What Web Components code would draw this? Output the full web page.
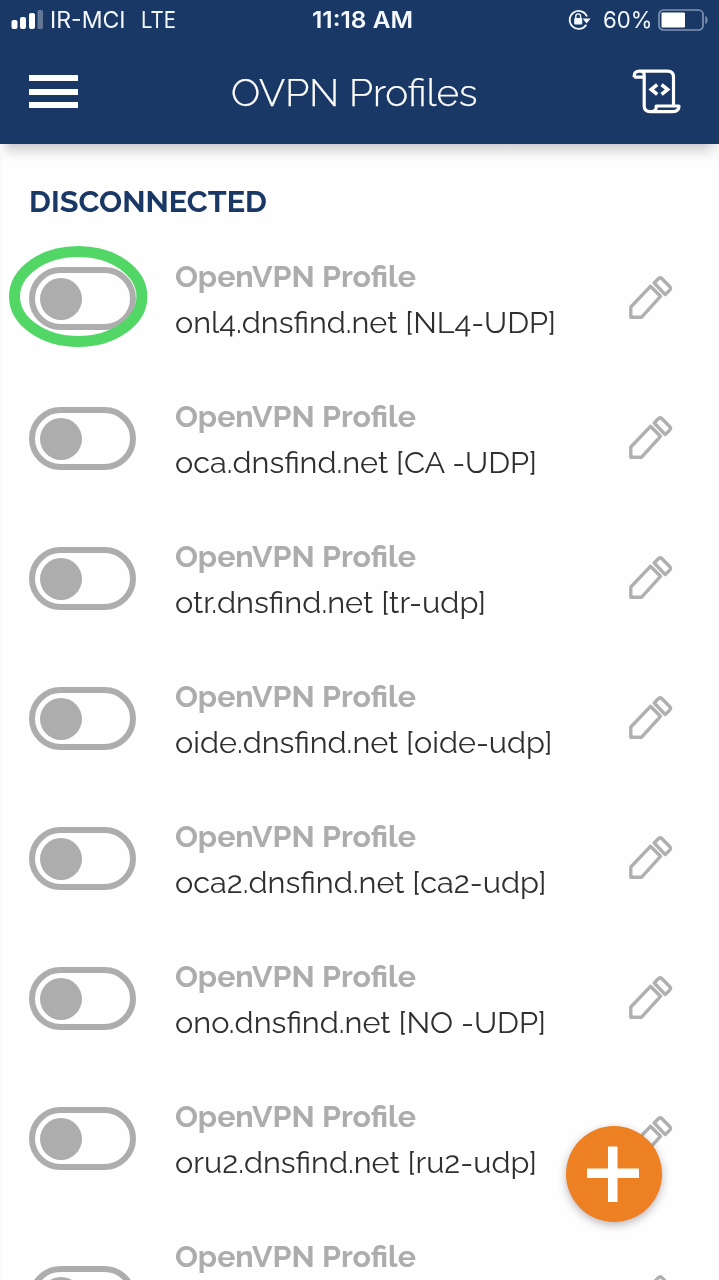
<!DOCTYPE html>
<html lang="en">
<head>
<meta charset="utf-8">
<title>OVPN Profiles</title>
<style>
html,body{margin:0;height:1280px;overflow:hidden;background:#fefefe}
body{font-family:Raleway,Lato,"Open Sans",sans-serif}
</style>
</head>
<body>
<vpn-app></vpn-app>
<script>
const define=(name,html,setup)=>customElements.define(name,class extends HTMLElement{
  connectedCallback(){
    if(this.shadowRoot)return;
    const t=document.createElement('template');
    t.innerHTML=html;
    this.attachShadow({mode:'open'}).append(t.content.cloneNode(true));
    if(setup)setup(this,this.shadowRoot);
  }
});

/* A line of text scaled horizontally to an exact advance width. */
define('fit-text',`<style>
:host{display:block;flex:none;white-space:pre}
span{display:inline-block;transform-origin:0 50%}
</style><span></span>`,(el,root)=>{
  const s=root.querySelector('span');
  const w=+el.getAttribute('w');
  s.textContent=el.getAttribute('text');
  const k=w/s.getBoundingClientRect().width;
  el.style.width=w+'px';
  s.style.transform='scaleX('+k+')';
});

define('status-bar',`<style>
:host{display:flex;align-items:center;height:40px;box-sizing:border-box;padding:0 9px 0 11px;color:#f4f9ff;
font:400 22.7px/40px Inter,sans-serif}
svg{display:block;flex:none}
.bars{margin-right:7px}.lte{margin-left:15px}.time{margin-left:136px;font-weight:600}
.lock{margin-left:155px}.pct{margin-left:12px}.bat{margin-left:6px}
</style>
<svg class="bars" width="32" height="20" viewBox="0 0 32 20" fill="#fff"><rect x=".5" y="10" width="6" height="9" rx="2"/><rect x="9" y="7" width="6" height="12" rx="2"/><rect x="18" y="3" width="6" height="16" rx="2"/><rect x="26.5" y="0" width="5.5" height="19" rx="1.5" opacity=".32"/></svg>
<fit-text text="IR-MCI" w="75.5"></fit-text>
<fit-text class="lte" text="LTE" w="35"></fit-text>
<fit-text class="time" text="11:18 AM" w="101"></fit-text>
<svg class="lock" width="23" height="22" viewBox="0 0 23 22"><path d="M18.3 15.7a9 9 0 1 1 .7-8.2" fill="none" stroke="#f4f9ff" stroke-width="1.8"/><path d="M14.6 9.5h8l-4 5z" fill="#f4f9ff"/><rect x="6.2" y="9" width="8" height="6.5" rx="1" fill="#f4f9ff"/><path d="M7.8 9.5V7.3a2.4 2.4 0 0 1 4.8 0v2.2" fill="none" stroke="#f4f9ff" stroke-width="1.4"/></svg>
<fit-text class="pct" text="60%" w="49.5"></fit-text>
<svg class="bat" width="52" height="22" viewBox="0 0 52 22"><rect x="1" y="1" width="44" height="20" rx="4.5" fill="none" stroke="#8293b2" stroke-width="1.7"/><rect x="3.5" y="3.5" width="23.5" height="15" rx="1" fill="#fff"/><path d="M47.3 7c3 1 3 7 0 8z" fill="#8293b2"/></svg>`);

define('app-header',`<style>
:host{display:block;height:144px;background:#193865;color:#fff}
.bar{display:flex;align-items:flex-start;padding:0 38px 0 29px;height:104px}
.menu{display:grid;gap:7.5px;width:49px;margin-top:35px}
.menu i{display:block;height:6px;background:#fff}
fit-text{margin-left:152.5px;font-weight:300;font-size:37.5px;line-height:48px;margin-top:28.5px;-webkit-text-stroke:.25px #fff}
svg{margin:29px 0 0 auto;flex:none}
</style>
<status-bar></status-bar>
<div class="bar"><div class="menu"><i></i><i></i><i></i></div>
<fit-text text="OVPN Profiles" w="246.5"></fit-text>
<svg width="49" height="46" viewBox="0 0 49 46" fill="none" stroke="#fff" stroke-width="3.2" stroke-linejoin="round">
<path d="M2.2 8.2V6.8C2.2 3.7 4.3 2.2 7.2 2.2H35.5c4.1 0 6 2 6 6V36M12.2 8.2H2.2M12.2 8.2V5.8c0-2.2-1.5-3.6-4-3.6M12.2 8V37c0 4 2 5.6 6 5.6M17.5 42.7H41c4 0 6-2 6-5.7H24.2v1.4c0 2.8-2.2 4.3-6.7 4.3"/>
<path d="M25.2 15.6l-6 4.9 6 4.9M29.6 15.6l6 4.9-6 4.9" stroke-width="3.6" stroke-linejoin="miter"/></svg></div>`);

define('toggle-switch',`<style>
:host{display:block;box-sizing:border-box;width:107px;height:63px;border:6px solid #adadad;border-radius:32px;padding:4.5px 5px;background:#fefefe}
i{display:block;width:42px;height:42px;border-radius:50%;background:#adadad}
</style><i></i>`);

define('edit-icon',`<style>:host{display:block}svg{display:block}</style>
<svg width="44" height="44" viewBox="0 0 44 44" fill="none" stroke="#b0b0b0" stroke-width="3.4" stroke-linejoin="round"><path d="M1.8 41.3V31L21.5 10.3 31.5 20.3 12.4 41.3z"/><path d="M25.2 7l4.1-4.2q1.8-1.8 3.7 0l7.4 7.4q2.2 2 .3 4l-4.5 4.3z"/></svg>`);

define('profile-row',`<style>
:host{display:flex;position:relative;height:140px;box-sizing:border-box;padding:0 46px 0 29px;align-items:flex-start}
:host([tall]){height:178px}
toggle-switch{margin-top:39px;flex:none}
.copy{margin-left:38.5px;padding-top:29px}
.kind{color:#adadad;font-weight:700;font-size:30px;line-height:40px}
.name{color:#2f2f2f;font-weight:400;font-size:30px;line-height:40px;margin-top:6px}
edit-icon{margin:48px 0 0 auto}
:host([tall]) toggle-switch{margin-top:58px}
:host([tall]) edit-icon{margin-top:67px}
::slotted(*){position:absolute;left:9px;top:18px}
</style>
<toggle-switch></toggle-switch>
<div class="copy"><fit-text class="kind" text="OpenVPN Profile" w="241"></fit-text></div>
<edit-icon></edit-icon><slot></slot>`,(el,root)=>{
  if(!el.hasAttribute('name'))return;
  const n=document.createElement('fit-text');
  n.className='name';
  n.setAttribute('text',el.getAttribute('name'));
  n.setAttribute('w',el.getAttribute('w'));
  root.querySelector('.copy').append(n);
});

define('focus-ring',`<style>:host{display:block}svg{display:block}</style>
<svg width="139" height="101" viewBox="0 0 139 101"><ellipse cx="69.2" cy="50.5" rx="63.7" ry="45" fill="none" stroke="#52d666" stroke-width="11"/></svg>`);

define('add-button',`<style>
:host{display:flex;align-items:center;justify-content:center;width:96px;height:96px;border-radius:50%;background:#ec8022;box-shadow:0 3px 8px rgba(60,40,60,.35)}
</style><svg width="54" height="56" viewBox="0 0 54 56" fill="#fff"><path d="M21 .5H30.5v22H52V32H30.500v24H21V32H0v-9.500h21z"/></svg>`);

define('vpn-app',`<style>
:host{display:flex;flex-direction:column;position:relative;width:719px;height:1280px;overflow:hidden;background:#fefefe;font-family:Raleway,Lato,"Open Sans",sans-serif}
app-header{flex:none}
main{height:1136px;overflow:hidden;box-sizing:border-box;border-left:2px solid #f9f9fa}
.shade{height:18px;background:linear-gradient(#cfcfd3,#e6e6e8 35%,#f6f6f7 70%,#fefefe);-webkit-mask:linear-gradient(90deg,#0004,#000 10px,#000 702px,#0004)}
.state{height:66px;box-sizing:border-box;padding:20px 0 0 27px;color:#193865;font-weight:700;font-size:30px;line-height:40px}
.list{margin-left:-2px}
add-button{position:absolute;left:565.5px;top:1126px}
</style>
<app-header></app-header>
<main><div class="shade"></div>
<div class="state"><fit-text text="DISCONNECTED" w="238"></fit-text></div>
<div class="list">
<profile-row name="onl4.dnsfind.net [NL4-UDP]" w="381"><focus-ring></focus-ring></profile-row>
<profile-row name="oca.dnsfind.net [CA -UDP]" w="362"></profile-row>
<profile-row name="otr.dnsfind.net [tr-udp]" w="311"></profile-row>
<profile-row name="oide.dnsfind.net [oide-udp]" w="377.5"></profile-row>
<profile-row name="oca2.dnsfind.net [ca2-udp]" w="371.5"></profile-row>
<profile-row name="ono.dnsfind.net [NO -UDP]" w="371"></profile-row>
<profile-row name="oru2.dnsfind.net [ru2-udp]" w="362"></profile-row>
<profile-row tall></profile-row>
</div></main>
<add-button></add-button>`);
</script>
</body>
</html>
